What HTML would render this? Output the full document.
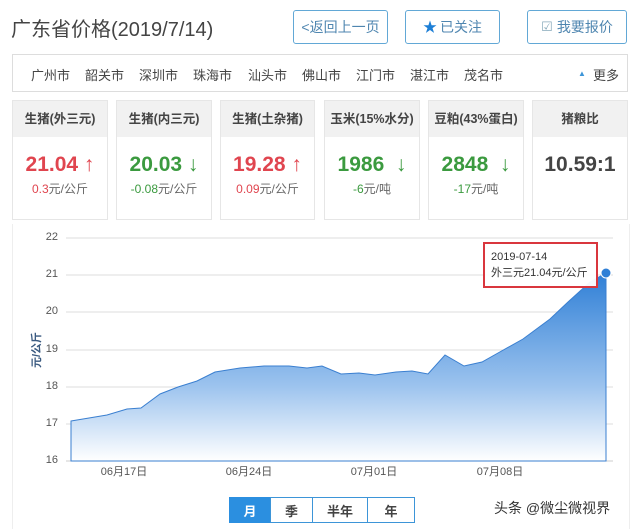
<!DOCTYPE html>
<html><head><meta charset="utf-8"><style>
*{margin:0;padding:0;box-sizing:border-box}
body{width:640px;height:529px;background:#fff;font-family:"Liberation Sans","Noto Sans CJK SC",sans-serif;position:relative;overflow:hidden;color:#333}
.a{position:absolute}
.btn{position:absolute;top:10px;height:34px;border:1px solid #62a8d6;border-radius:3px;font-size:14px;color:#4f86b0;display:flex;align-items:center;justify-content:center;background:#fff}
.city{position:absolute;top:65px;font-size:13px;color:#444}
.card{position:absolute;top:100px;height:120px;border:1px solid #e6e6e6;background:#fff;text-align:center}
.card .h{height:36px;background:#f1f1f1;font-size:12.5px;font-weight:bold;line-height:36px;color:#444}
.card .p{font-size:21px;font-weight:bold;margin-top:16px;height:24px;line-height:24px}
.card .s{font-size:12px;margin-top:3px;color:#666}
.r{color:#e0454f}.g{color:#3b9a3f}
.yl{position:absolute;left:36px;width:22px;text-align:right;font-size:11px;color:#555}
.xl{position:absolute;top:463px;font-size:11px;color:#555;width:60px;text-align:center}
.tb{position:absolute;top:497px;height:26px;border:1px solid #3d95d8;font-size:13px;font-weight:bold;display:flex;align-items:center;justify-content:center;color:#444;background:#fff}
</style></head><body>
<div class="a" style="left:11px;top:13px;font-size:20px;color:#444">广东省价格(2019/7/14)</div>
<div class="btn" style="left:293px;width:95px">&lt;返回上一页</div>
<div class="btn" style="left:405px;width:95px"><span style="color:#1d7fd6;margin-right:3px">★</span>已关注</div>
<div class="btn" style="left:527px;width:100px"><span style="color:#8ab;margin-right:4px;font-size:13px">☑</span>我要报价</div>
<div class="a" style="left:12px;top:54px;width:616px;height:38px;border:1px solid #ddd"></div>
<div class="city" style="left:31px">广州市</div><div class="city" style="left:85px">韶关市</div><div class="city" style="left:139px">深圳市</div><div class="city" style="left:193px">珠海市</div><div class="city" style="left:248px">汕头市</div><div class="city" style="left:302px">佛山市</div><div class="city" style="left:356px">江门市</div><div class="city" style="left:410px">湛江市</div><div class="city" style="left:464px">茂名市</div>
<div class="city" style="left:578px;font-size:8px;top:69px;color:#3d95d8">▲</div><div class="city" style="left:593px">更多</div>

<div class="card" style="left:12px;width:96px"><div class="h">生猪(外三元)</div><div class="p r">21.04 ↑</div><div class="s"><span class="r">0.3</span>元/公斤</div></div>
<div class="card" style="left:116px;width:96px"><div class="h">生猪(内三元)</div><div class="p g">20.03 ↓</div><div class="s"><span class="g">-0.08</span>元/公斤</div></div>
<div class="card" style="left:220px;width:95px"><div class="h">生猪(土杂猪)</div><div class="p r">19.28 ↑</div><div class="s"><span class="r">0.09</span>元/公斤</div></div>
<div class="card" style="left:324px;width:96px"><div class="h">玉米(15%水分)</div><div class="p g">1986 &nbsp;↓</div><div class="s"><span class="g">-6</span>元/吨</div></div>
<div class="card" style="left:428px;width:96px"><div class="h">豆粕(43%蛋白)</div><div class="p g">2848 &nbsp;↓</div><div class="s"><span class="g">-17</span>元/吨</div></div>
<div class="card" style="left:532px;width:96px"><div class="h">猪粮比</div><div class="p" style="color:#444">10.59:1</div></div>

<div class="a" style="left:12px;top:224px;width:618px;height:305px;border-left:1px solid #eee;border-right:1px solid #eee"></div>
<svg class="a" style="left:0;top:0" width="640" height="529">
<defs><linearGradient id="gr" x1="0" y1="0" x2="0" y2="1"><stop offset="0" stop-color="#2f7fd6"/><stop offset="0.6" stop-color="#9cc3ee"/><stop offset="1" stop-color="#fff"/></linearGradient></defs>
<g stroke="#ddd" stroke-width="1">
<line x1="66" y1="238" x2="613" y2="238"/><line x1="66" y1="275" x2="613" y2="275"/><line x1="66" y1="312" x2="613" y2="312"/><line x1="66" y1="350" x2="613" y2="350"/><line x1="66" y1="387" x2="613" y2="387"/><line x1="66" y1="424" x2="613" y2="424"/><line x1="66" y1="461" x2="613" y2="461" stroke="#ccc"/>
</g>
<path d="M71,421 L107,415 L127,409 L141,408 L160,394 L178,387 L197,381 L215,372 L240,368 L264,366 L289,366 L307,368 L322,366 L341,374 L359,373 L375,375 L396,372 L412,371 L428,374 L445,355 L464,366 L482,362 L498,353 L523,339 L550,319 L568,302 L590,282 L606,273 L606,461 L71,461Z" fill="url(#gr)" stroke="#3a7fd0" stroke-width="1"/>
<circle cx="606" cy="273" r="5" fill="#2f7fd6" stroke="#fff" stroke-width="1"/>
<text x="40" y="350" transform="rotate(-90 40 350)" font-size="11" fill="#3a5a80" text-anchor="middle" font-weight="bold">元/公斤</text>
</svg>
<div class="yl" style="top:231px">22</div><div class="yl" style="top:268px">21</div><div class="yl" style="top:305px">20</div><div class="yl" style="top:343px">19</div><div class="yl" style="top:380px">18</div><div class="yl" style="top:417px">17</div><div class="yl" style="top:454px">16</div>
<div class="xl" style="left:94px">06月17日</div><div class="xl" style="left:219px">06月24日</div><div class="xl" style="left:344px">07月01日</div><div class="xl" style="left:470px">07月08日</div>
<div class="a" style="left:483px;top:242px;width:115px;height:46px;border:2px solid #d9363e;background:rgba(255,255,255,.95);font-size:11px;line-height:16px;padding:5px 0 0 6px;color:#333">2019-07-14<br>外三元21.04元/公斤</div>
<div class="tb" style="left:229px;width:42px;background:#2b8fe0;color:#fff;border-color:#2b8fe0">月</div>
<div class="tb" style="left:270px;width:43px">季</div>
<div class="tb" style="left:312px;width:56px">半年</div>
<div class="tb" style="left:367px;width:48px">年</div>
<div class="a" style="left:494px;top:498px;font-size:14px;color:#333">头条 @微尘微视界</div>
</body></html>
